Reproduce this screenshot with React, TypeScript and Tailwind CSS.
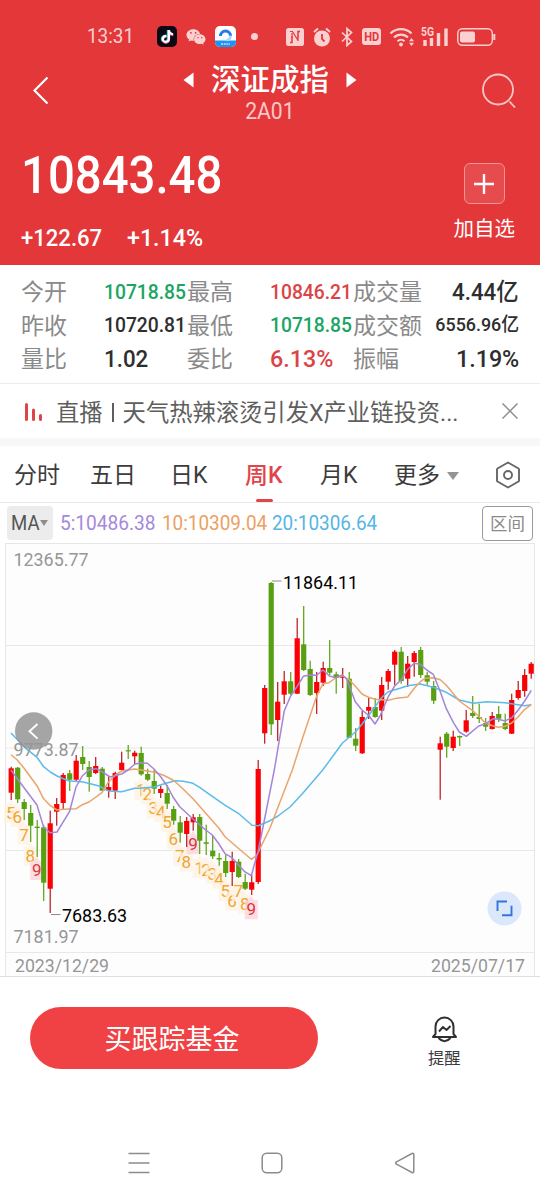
import { FaTiktok, FaWeixin } from "react-icons/fa";

const UP = "#fb0106";
const DOWN = "#58a011";

// color, high, body top, body bottom, low
const candles: [string, number, number, number, number][] = [
  ["r", 766.7, 768.3, 792.7, 800],
  ["g", 767, 767.7, 799.3, 803],
  ["g", 799, 802, 809, 820],
  ["g", 805, 813, 825.7, 842],
  ["g", 820, 826.7, 828, 857],
  ["g", 825, 827.3, 882.7, 901],
  ["r", 810.7, 823.3, 888.7, 913],
  ["r", 798, 804, 811.7, 825.7],
  ["r", 773, 775, 803, 809],
  ["g", 770, 773.3, 779.7, 791],
  ["r", 755, 760.7, 779.7, 781],
  ["g", 746, 757, 764, 770],
  ["g", 761, 767, 777, 791.7],
  ["r", 757, 766, 773, 774],
  ["g", 767, 768.7, 790.7, 791],
  ["r", 776.7, 787, 790.7, 797.7],
  ["r", 771.7, 773, 790.7, 799],
  ["r", 751.7, 762.7, 770, 770.5],
  ["g", 745, 750.2, 751.4, 759],
  ["r", 750.7, 752.7, 756.3, 764],
  ["g", 746.7, 753, 774.3, 775.7],
  ["g", 768.7, 774, 779.7, 781],
  ["g", 769.3, 781, 788.7, 794],
  ["r", 785.7, 789, 793, 798],
  ["g", 785, 793, 803.7, 809],
  ["g", 806, 809, 820.7, 824.7],
  ["g", 816, 822.3, 832.7, 842.7],
  ["r", 817, 821, 834, 847],
  ["r", 814, 817.3, 822.3, 830.7],
  ["g", 814, 817, 840.7, 854],
  ["g", 824.7, 842.3, 843.8, 855],
  ["g", 835, 850.7, 856.3, 859],
  ["g", 853, 858, 859.5, 865.7],
  ["g", 855, 861, 873, 877],
  ["r", 851.7, 861, 872, 886],
  ["g", 859, 861.7, 877, 878],
  ["g", 873.7, 882, 888.7, 890],
  ["r", 875, 882.3, 889.7, 895],
  ["r", 760, 769, 882, 884],
  ["r", 685, 688, 733.3, 743.7],
  ["g", 582, 583, 724.3, 735],
  ["r", 682, 701.7, 720, 741],
  ["r", 671, 681.3, 694.7, 704],
  ["g", 672, 681.3, 693.7, 695],
  ["r", 618, 638.3, 693.7, 694],
  ["g", 606, 644.3, 670, 671],
  ["g", 660.7, 669, 695, 696],
  ["r", 672, 682, 693, 714],
  ["r", 661.7, 668, 682.7, 686],
  ["g", 640, 668, 672.7, 675],
  ["g", 671.7, 674.3, 678, 693.7],
  ["r", 668, 676.6, 677.8, 688],
  ["g", 672, 678.7, 737.7, 738],
  ["g", 728, 738.7, 745.7, 751],
  ["r", 711, 717, 753.3, 754],
  ["r", 697.7, 707, 710.7, 719],
  ["g", 698, 707, 717, 717.7],
  ["r", 677, 685, 710.7, 720],
  ["r", 669, 671, 681.7, 689.7],
  ["r", 650, 651.7, 664.7, 685],
  ["g", 647, 651.7, 681, 683.7],
  ["r", 656, 663.7, 678.7, 687],
  ["r", 651, 653, 662, 676.7],
  ["g", 647, 650, 675, 678],
  ["g", 672, 675.3, 681.7, 685],
  ["g", 681, 686, 700.7, 704],
  ["r", 736.7, 743.3, 749.7, 799.7],
  ["g", 732, 733.7, 746.7, 757.7],
  ["r", 730.7, 736.7, 748, 751],
  ["g", 735.5, 736, 737.5, 746],
  ["r", 710, 720.3, 731.7, 732.7],
  ["g", 696, 713, 716, 718],
  ["g", 703.7, 717, 719, 723],
  ["g", 718, 723, 726.7, 731],
  ["r", 712, 716, 729, 729.5],
  ["g", 706, 714, 718.7, 722],
  ["g", 713.7, 723, 729, 730],
  ["r", 693.7, 700, 733.7, 734],
  ["r", 681, 690, 698, 699.7],
  ["r", 669, 675, 691, 696.7],
  ["r", 662, 663.7, 673.7, 678.7],
];

const ma5 =
  "11,770 17.5,779 37,805 43.5,826.7 50,832.7 57,832 69.5,811.7 76,787 82.5,775.7 89,770 96,768.7 102,771.7 110,777 121.7,774 128,770 134.7,764.3 140.7,762.7 147.3,763.3 153.7,768.7 160.7,776.7 167,785.7 173,797 179.7,806.7 193,819 205.7,830 212.3,835 219,844 225,853.7 232,857.7 244.7,871.7 251.3,875.7 254.5,864 258,852 265,817 270,791.7 274.3,770 284.3,710.7 290.3,696.7 297,686.7 303.3,676.3 309.7,675 316.7,675.3 323,670 329.3,676 335.7,677.7 342.3,675 346.7,679.3 355.3,701.7 362,710 368.7,715.3 375,724 380,716 388.3,696.7 394.7,686 401,680 407.7,669.3 414.3,663.3 420.3,664.3 426.7,670 433.3,674.3 440.3,691.7 446.3,708.7 453.3,722.3 459.3,732 466.3,736.3 478.7,726 485.3,724 493.3,718.7 498.3,719.3 505,721 511.7,717.7 518.3,710 524.7,701 531.3,690.3";
const ma10 =
  "11,754.7 17.3,760 23.7,767.7 37,785.7 43.3,798.3 50.3,805.7 57,810 63.3,809.3 76.3,808.7 82.3,804.7 89,802 102,792.7 108.7,781.7 115.3,775 121.7,771 134.7,769 153.7,772 163,775 173,780 179.7,785.7 193,798.7 205.7,813.3 219,828.3 225,836.7 238,848 251.3,859.3 256.7,855.3 270,828 292.3,770 303,736.7 316.7,696 323,683.7 329,682.7 335.7,678 342.3,675.7 349,679.7 355,685.7 362,694 368.7,697.3 375,699.3 388.3,700.3 394.7,698.6 407.7,697 414.3,688.3 420.3,681.7 425,678.3 433.3,677.7 440.3,679.7 446.3,685.3 459.3,701 472.3,710.3 485.3,722.7 492.3,725.7 498.3,727.3 505,726.3 511.7,723 518.3,716.7 524.7,709.3 531.3,704.7";
const ma20 =
  "11,733 17,739.3 25,747.7 37,757.3 43.3,766.3 50.3,772 57,776 68.3,780.7 83.3,782 100,786.3 108.7,791 121.7,791.7 134.7,788.3 140,788.3 153.7,787 167,783 175,780.7 183.3,781.3 193,783.3 200,787.7 212.3,796.3 225.3,805.3 238.3,813.3 252,825.3 258.3,825.7 270,820.7 278,816 290,807 303,793 322.7,770 342.3,743.3 355.3,732 362,724.3 375,706.7 382,697.3 388.3,691.7 400,688.3 407.7,685.7 420.3,684 433.3,687.3 446.3,692.3 459.3,700 473.3,703.3 486.7,701.7 505,702.7 524.7,705.7 531.3,704.7";

// nine-turn counters: digit, center x, center y
const marks: [number, number, number][] = [
  [5, 10.7, 812.7],
  [6, 17.3, 817],
  [7, 24, 834.7],
  [8, 30.3, 855.7],
  [9, 36.7, 870],
  [1, 140.7, 790.3],
  [2, 147.3, 794],
  [3, 153.3, 808.3],
  [4, 160.7, 811.7],
  [5, 167, 822],
  [6, 173.3, 839.3],
  [7, 179.7, 856],
  [8, 186.3, 861.7],
  [9, 193, 844.3],
  [1, 199.3, 867.7],
  [2, 206, 869.7],
  [3, 212.3, 873.7],
  [4, 219, 878.7],
  [5, 225.3, 891.3],
  [6, 232, 900.7],
  [7, 238.3, 891.3],
  [8, 244.7, 903.7],
  [9, 251.3, 909.3],
];

const StatusBar = () => (
  <div className="flex h-14 items-center pl-[87px] pt-[17px] text-[#fbd0d0]">
    <span className="w-[70px]">
      <span className="inline-block origin-left scale-x-90 text-[21px] leading-6">
        13:31
      </span>
    </span>
    <span className="relative flex h-[21px] w-5 items-center justify-center rounded-[5px] bg-[#0b0a14]">
      <FaTiktok className="absolute left-[3px] top-[4px] size-[13px] text-[#35e6e0]" />
      <FaTiktok className="absolute left-[4px] top-[4.5px] size-[13px] text-[#f2466b]" />
      <FaTiktok className="absolute left-[3.5px] top-[4px] size-[13px] text-white" />
    </span>
    <FaWeixin className="ml-[9px] size-5" />
    <svg className="ml-[9px] h-[21px] w-[21px]" viewBox="0 0 21 21">
      <rect width="21" height="21" rx="5" fill="#fff" />
      <path d="M0 14.5h21V16a5 5 0 0 1-5 5H5a5 5 0 0 1-5-5Z" fill="#1b95f5" />
      <path
        d="M5.500 10a5 5 0 0 1 10 0"
        fill="none"
        stroke="#2478f0"
        strokeWidth="3"
      />
      <path
        d="M15.500 9.500c0 3-1.500 4.500-4 4.500"
        fill="none"
        stroke="#a8d6fb"
        strokeWidth="2.500"
      />
      <path d="M6 18h9" stroke="#bfe2ff" strokeWidth="1.6" strokeDasharray="2 .7" />
    </svg>
    <span className="ml-[15px] size-[7px] rounded-full bg-[#fbd0d0]" />
    {/* NFC */}
    <svg className="ml-7 h-[18px] w-[18px]" viewBox="0 0 18 18">
      <rect width="18" height="18" rx="2.5" fill="currentColor" />
      <path
        d="M4 14.500h2V8.500M14 3.500h-2v6"
        fill="none"
        stroke="#e33739"
        strokeWidth="1.5"
      />
      <path d="M4 3.500h2.500l5.500 9M6 5v5M12 8v5" stroke="#e33739" strokeWidth="1.200" fill="none" />
    </svg>
    {/* alarm */}
    <svg className="ml-[9px] h-5 w-[18px]" viewBox="0 0 18 20">
      <circle cx="9" cy="11.5" r="8" fill="currentColor" />
      <path
        d="M1 5 5 1.5M17 5l-4-3.5"
        stroke="currentColor"
        strokeWidth="2"
        fill="none"
      />
      <path d="M9 7v5l2.5 2.5" stroke="#e33739" strokeWidth="1.8" fill="none" />
    </svg>
    {/* bluetooth */}
    <svg className="ml-[9px] h-5 w-[14px]" viewBox="0 0 14 20">
      <path
        d="m2 5.5 9.5 9L7 18.500V1.500l4.500 4L2 14.500"
        stroke="currentColor"
        strokeWidth="1.7"
        fill="none"
      />
    </svg>
    <span className="ml-[8px] flex h-[17px] w-[19px] items-center justify-center rounded-[3px] bg-[#fbd0d0] text-[#e33739]">
      <span className="inline-block scale-x-[.85] text-[13px] font-bold leading-none">
        HD
      </span>
    </span>
    {/* wifi */}
    <svg className="ml-[8px] h-5 w-[26px]" viewBox="0 0 26 20">
      <g fill="none" stroke="currentColor" strokeWidth="2.2">
        <path d="M1.500 6.500a15 15 0 0 1 21 0" />
        <path d="M5 10.500a10 10 0 0 1 14 0" />
        <path d="M8.500 14.200a5.200 5.200 0 0 1 7 0" />
      </g>
      <circle cx="12" cy="17.500" r="1.900" fill="currentColor" />
      <path d="m22.500 11 2.500 3.200h-5zM22.500 19l2.500-3.200h-5z" fill="currentColor" />
    </svg>
    {/* signal */}
    <svg className="ml-[6px] h-5 w-[27px]" viewBox="0 0 27 20">
      <text
        x="0"
        y="9"
        fontSize="12"
        fontWeight="700"
        textLength="13"
        lengthAdjust="spacingAndGlyphs"
        fill="currentColor"
      >
        5G
      </text>
      <path
        d="M4 13v6M10.500 11v8M17.500 6v13M25 1.500V19"
        stroke="currentColor"
        strokeWidth="3.400"
      />
    </svg>
    {/* battery */}
    <svg className="ml-[9px] h-5 w-[39px]" viewBox="0 0 39 20">
      <rect
        x=".8"
        y="1.800"
        width="34.500"
        height="16.500"
        rx="4.500"
        fill="none"
        stroke="currentColor"
        strokeWidth="1.400"
      />
      <rect x="3" y="4.500" width="15" height="11" rx="2" fill="currentColor" />
      <path d="M37.300 7v6" stroke="currentColor" strokeWidth="2" />
    </svg>
  </div>
);

const Header = () => (
  <header className="h-[265px] bg-[#e33739] text-white">
    <StatusBar />
    <div className="flex h-[69px] items-center justify-between pl-8 pr-[23px]">
      <svg className="-mt-0.5 h-7 w-[18px]" viewBox="0 0 18 28">
        <path
          d="M15.500 1.500 2.500 14.500l13 13"
          fill="none"
          stroke="#fff"
          strokeWidth="2.200"
        />
      </svg>
      <div className="flex flex-col items-center pl-[9px] pt-[4px]">
        <div className="flex items-center">
          <svg className="h-4 w-[11px]" viewBox="0 0 11 16">
            <path d="M10.500.5v15L.5 8z" fill="#fff" />
          </svg>
          <h1 className="mx-[17px] text-[29.500px] font-medium leading-10">
            深证成指
          </h1>
          <svg className="h-4 w-[11px]" viewBox="0 0 11 16">
            <path d="M.5.5v15l10-7.500z" fill="#fff" />
          </svg>
        </div>
        <span className="-mt-0.5 scale-x-[.92] text-[23px] leading-7 text-[#fbc8c8]">
          2A01
        </span>
      </div>
      <svg className="-mt-0.5 h-9 w-[36px]" viewBox="0 0 36 36">
        <circle
          cx="17"
          cy="17.500"
          r="15"
          fill="none"
          stroke="#f9c6c6"
          strokeWidth="1.800"
        />
        <path d="m28.500 29.500 5.500 6" stroke="#f9c6c6" strokeWidth="1.800" />
      </svg>
    </div>
    <div className="flex justify-between pl-[21px] pr-[25px]">
      <div className="flex flex-col">
        <span className="mt-[20.500px] origin-left scale-x-[.91] text-[52px] font-medium leading-[60px]">
          10843.48
        </span>
        <div className="mt-[19px] flex text-[23px] font-medium leading-7">
          <span className="w-[106px] origin-left scale-x-[.96]">+122.67</span>
          <span className="origin-left scale-x-[1.01]">+1.14%</span>
        </div>
      </div>
      <div className="flex flex-col items-center pt-[38px]">
        <span className="flex h-[41px] w-[41px] items-center justify-center rounded-[6px] border border-[#f19495] bg-[#e64b4d]">
          <svg className="size-5" viewBox="0 0 20 20">
            <path d="M10 0v20M0 10h20" stroke="#fff" strokeWidth="2.400" />
          </svg>
        </span>
        <span className="mt-[11px] text-[20.500px] leading-7">加自选</span>
      </div>
    </div>
  </header>
);

const stats = [
  {
    label: "今开",
    value: "10718.85",
    cls: "text-[#1aa564] text-[20.500px] scale-x-[.94]",
  },
  {
    label: "最高",
    value: "10846.21",
    cls: "text-[#db4447] text-[20.500px] scale-x-[.94]",
  },
  {
    label: "成交量",
    value: "4.44亿",
    cls: "text-[#2e2e2e] text-[24px] scale-x-[.93]",
  },
  {
    label: "昨收",
    value: "10720.81",
    cls: "text-[#2e2e2e] text-[20.500px] scale-x-[.94]",
  },
  {
    label: "最低",
    value: "10718.85",
    cls: "text-[#1aa564] text-[20.500px] scale-x-[.94]",
  },
  {
    label: "成交额",
    value: "6556.96亿",
    cls: "text-[#2e2e2e] text-[19px] scale-x-[.94]",
  },
  {
    label: "量比",
    value: "1.02",
    cls: "text-[#2e2e2e] text-[24px] scale-x-[.93]",
  },
  {
    label: "委比",
    value: "6.13%",
    cls: "text-[#db4447] text-[24px] scale-x-[.97]",
  },
  {
    label: "振幅",
    value: "1.19%",
    cls: "text-[#2e2e2e] text-[24px] scale-x-[.97]",
  },
];

const Stats = () => (
  <section className="grid h-[119px] grid-cols-3 content-start border-b border-[#ececec] pl-[21px] pr-[21px] pt-[10px]">
    {stats.map((item, i) => (
      <div key={i} className="flex h-[33.500px] items-center whitespace-nowrap">
        <span
          className={`shrink-0 pt-[3px] text-[23px] leading-8 text-[#8a8a8a] ${
            i % 3 === 2 ? "" : "w-[83px]"
          }`}
        >
          {item.label}
        </span>
        <span
          className={`font-medium leading-8 ${item.cls} ${
            i % 3 === 2 ? "ml-auto origin-right" : "origin-left"
          }`}
        >
          {item.value}
        </span>
      </div>
    ))}
  </section>
);

const Notice = () => (
  <div className="flex h-[54px] items-center pl-6 pr-[22px]">
    <svg className="mt-0.5 h-[18px] w-5" viewBox="0 0 20 18">
      <path
        d="M2.500 1.500v15M9.500 7v9.500M16.500 12.500v4"
        stroke="#de4549"
        strokeWidth="3"
        strokeLinecap="round"
      />
    </svg>
    <span className="ml-[12px] flex items-center whitespace-nowrap pt-[4px] text-[23.300px] leading-8 text-[#5e5e5e]">
      直播
      <span className="mx-[9px] -mt-0.5 inline-block h-[19px] w-[2px] bg-[#5e5e5e]" />
      天气热辣滚烫引发X产业链投资...
    </span>
    <svg className="ml-auto size-4" viewBox="0 0 16 16">
      <path d="m.5.5 15 15m0-15-15 15" stroke="#8d8d8d" strokeWidth="1.500" />
    </svg>
  </div>
);

const Tabs = () => (
  <nav className="flex h-[57px] items-center border-b border-[#e9e9e9] pl-[14px] pt-[5px] text-[23px] text-[#3c3c3c]">
    <span className="w-[76px]">分时</span>
    <span className="w-[80px]">五日</span>
    <span className="w-[75px]">日K</span>
    <span className="relative w-[75px] font-medium text-[#df454b]">
      周K
      <i className="absolute -bottom-[8px] left-[11px] h-[3px] w-[17px] rounded-full bg-[#df454b]" />
    </span>
    <span className="w-[74px]">月K</span>
    <span>更多</span>
    <svg className="-mt-0.5 ml-[7px] h-2 w-3" viewBox="0 0 12 8">
      <path d="M0 0h12L6 8z" fill="#949494" />
    </svg>
    <svg className="-mt-1 ml-[36px] h-[28px] w-[26px]" viewBox="0 0 26 28">
      <path
        d="M13 1.500 23.500 7.500a1 1 0 0 1 .5.900v11.200a1 1 0 0 1-.5.900L13 26.500 2.500 20.500a1 1 0 0 1-.5-.9V8.400a1 1 0 0 1 .5-.9Z"
        fill="none"
        stroke="#666"
        strokeWidth="1.900"
        strokeLinejoin="round"
      />
      <circle cx="13" cy="14" r="4" fill="none" stroke="#666" strokeWidth="1.900" />
    </svg>
  </nav>
);

const MaBar = () => (
  <div className="flex h-[40px] items-center pl-[7px] pr-[7px] text-[20px] whitespace-nowrap">
    <span className="flex h-[34px] w-[46px] items-center rounded-[4px] bg-[#ececec] pl-[4px] text-[#555]">
      <span className="w-[29px] origin-left scale-x-[.93]">MA</span>
      <svg className="h-[6px] w-2" viewBox="0 0 8 6">
        <path d="M0 0h8L4 6z" fill="#8d8d8d" />
      </svg>
    </span>
    <span className="ml-[7px] w-[102px] text-[#a588dc]">
      <span className="inline-block origin-left scale-x-[.955]">5:10486.38</span>
    </span>
    <span className="w-[110px] text-[#eca063]">
      <span className="inline-block origin-left scale-x-[.945]">
        10:10309.04
      </span>
    </span>
    <span className="text-[#55b5e5]">
      <span className="inline-block origin-left scale-x-[.945]">
        20:10306.64
      </span>
    </span>
    <span className="ml-auto flex h-[35px] w-[51px] items-center justify-center rounded-[4px] border border-[#9a9a9a] pt-0.5 text-[17.500px] text-[#8a8a8a]">
      区间
    </span>
  </div>
);

const AxisText = ({ x, y, w, dark = false, children }) => (
  <text
    x={x}
    y={y}
    textLength={w}
    lengthAdjust="spacingAndGlyphs"
    fontSize="18"
    fill={dark ? "#000" : "#969696"}
  >
    {children}
  </text>
);

const Chart = () => (
  <svg className="block h-[434px] w-[540px]" viewBox="0 543 540 434">
    <rect x="5.500" y="543.500" width="529" height="433" fill="#fdfdfd" stroke="#e6e6e6" />
    <path d="M6 645.500H534M6 748H534M6 850.500H534M6 952.500H534" stroke="#e8e8e8" />
    <path d="M0 976.500H540" stroke="#dedede" />

    {marks.map(([n, x, y], i) => (
      <g key={i}>
        <path
          d={`M${x - 6.5} ${y - 9}h3.500l3-4 3 4h3.500v19h-13z`}
          fill={n === 9 ? "#fbd3d8" : "#fdf1e3"}
          fillOpacity=".75"
        />
        <text
          x={x}
          y={y + 6}
          fontSize="17"
          textAnchor="middle"
          fill={n === 9 ? "#dd3540" : "#eea531"}
        >
          {n}
        </text>
      </g>
    ))}

    {candles.map(([c, high, top, bottom, low], i) => {
      const x = 11.2 + i * 6.5;
      return (
        <g key={i} fill={c === "r" ? UP : DOWN}>
          <rect
            x={x - 0.6}
            y={high}
            width="1.200"
            height={low - high}
            fill={c === "r" ? "#b5161a" : DOWN}
          />
          <rect x={x - 2.6} y={top} width="5.200" height={bottom - top} />
        </g>
      );
    })}

    <g fill="none" strokeWidth="1.500" strokeLinejoin="round">
      <polyline points={ma20} stroke="#5bbbea" />
      <polyline points={ma10} stroke="#eaa46c" />
      <polyline points={ma5} stroke="#a386d8" />
    </g>

    <path d="M272 581h9.500M51 914.500h9.500" stroke="#8c8c8c" strokeWidth="1.200" />
    <AxisText x={283} y={589} w={75} dark>
      11864.11
    </AxisText>
    <AxisText x={62} y={922} w={65} dark>
      7683.63
    </AxisText>

    {/* scroll back */}
    <circle cx="33.700" cy="731" r="18.700" fill="#8f8f8f" fillOpacity=".8" />
    <path
      d="m37.500 724-8 7.300 8 7.300"
      fill="none"
      stroke="#fff"
      strokeWidth="1.900"
    />

    <AxisText x={13.5} y={566} w={75}>
      12365.77
    </AxisText>
    <AxisText x={13.5} y={756} w={65}>
      9773.87
    </AxisText>
    <AxisText x={13.5} y={942.5} w={65}>
      7181.97
    </AxisText>
    <AxisText x={15} y={972} w={94}>
      2023/12/29
    </AxisText>
    <AxisText x={431} y={972} w={94}>
      2025/07/17
    </AxisText>

    {/* fullscreen */}
    <circle cx="504.500" cy="908.500" r="17" fill="#dbe7fb" />
    <path
      d="M497.500 911v-9.500h9.500M502 915.200h9.500v-9.500"
      fill="none"
      stroke="#3474dc"
      strokeWidth="1.900"
    />
  </svg>
);

const Footer = () => (
  <footer className="flex h-[134px] pl-[30px] pt-[30px]">
    <button className="h-[62px] w-[288px] rounded-full bg-[#f04244] pr-1 pt-1 text-[27px] leading-none text-white">
      买跟踪基金
    </button>
    <div className="ml-[110px] mt-[8px] flex flex-col items-center text-[#3a3a3a]">
      <svg className="h-7 w-[27px]" viewBox="0 0 27 28">
        <g fill="none" stroke="#2f2f2f" strokeWidth="2" strokeLinejoin="round">
          <path d="M4.500 19V11.500a9 9 0 0 1 18 0V19l2.500 3H2z" />
          <path d="M7.500 23q6 6.500 12 0" />
          <path d="m8 16.500 4-4.500 3.500 3 4-4" strokeWidth="1.900" />
        </g>
      </svg>
      <span className="mt-[4px] text-[16.300px] leading-6">提醒</span>
    </div>
  </footer>
);

const NavBar = () => (
  <div className="flex h-[89px] items-center justify-between pl-[128px] pr-[124px] pt-[15px]">
    <svg className="h-[22px] w-[22px]" viewBox="0 0 22 22">
      <path d="M.5 1.500h21M.5 11h21M.5 20.500h21" stroke="#8c8c8c" strokeWidth="1.500" />
    </svg>
    <svg className="h-[22px] w-[22px]" viewBox="0 0 22 22">
      <rect
        x="1.200"
        y="1.200"
        width="19.600"
        height="19.600"
        rx="4.500"
        fill="none"
        stroke="#8c8c8c"
        strokeWidth="1.500"
      />
    </svg>
    <svg className="h-[22px] w-[22px]" viewBox="0 0 22 22">
      <path
        d="M18 1.500 2.500 9.800a1.300 1.300 0 0 0 0 2.400L18 20.500a1.200 1.200 0 0 0 1.800-1V2.500A1.200 1.200 0 0 0 18 1.500Z"
        fill="none"
        stroke="#8c8c8c"
        strokeWidth="1.500"
      />
    </svg>
  </div>
);

export default function App() {
  return (
    <div className="h-[1200px] w-[540px] overflow-hidden bg-white font-['Roboto','Noto_Sans_CJK_SC',sans-serif]">
      <Header />
      <Stats />
      <Notice />
      <div className="h-2 bg-[#f7f7f7]" />
      <Tabs />
      <MaBar />
      <Chart />
      <Footer />
      <NavBar />
    </div>
  );
}
